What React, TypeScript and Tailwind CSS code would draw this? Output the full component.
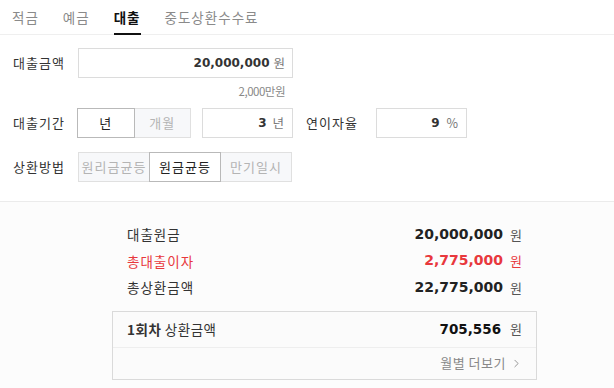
import { ChevronRight } from 'lucide-react';

const KR = "font-['Noto_Sans_CJK_KR',sans-serif]";
const NUM = "font-['DejaVu_Sans',sans-serif]";

const TABS = [
  { label: '적금', active: false },
  { label: '예금', active: false },
  { label: '대출', active: true },
  { label: '중도상환수수료', active: false },
];

const SUMMARY = [
  { label: '대출원금', value: '20,000,000', red: false },
  { label: '총대출이자', value: '2,775,000', red: true },
  { label: '총상환금액', value: '22,775,000', red: false },
];

function Seg({ label, active }: { label: string; active?: boolean }) {
  return (
    <div
      className={
        active
          ? 'relative z-10 flex h-full flex-1 items-center justify-center border border-[#b9b9b9] bg-white text-[13px] tracking-[1px] text-[#222] -mx-px'
          : 'flex h-full flex-1 items-center justify-center border border-[#e0e0e0] bg-[#f7f8fa] text-[13px] tracking-[1px] text-[#b4b4b4]'
      }
    >
      {label}
    </div>
  );
}

export default function App() {
  return (
    <div className={`w-[614px] h-[388px] overflow-hidden bg-white ${KR}`}>
      {/* tabs */}
      <div className="flex h-[35px] gap-[24px] border-b border-[#efefef] px-[12px]">
        {TABS.map((tab) => (
          <div
            key={tab.label}
            className={
              tab.active
                ? 'flex h-[35px] items-center border-b-2 border-[#111] pt-[1px] text-[13.5px] font-bold tracking-[1px] text-[#111]'
                : 'flex h-[35px] items-center pb-[1px] text-[13.5px] tracking-[1px] text-[#8a8a8a]'
            }
          >
            {tab.label}
          </div>
        ))}
      </div>

      {/* form */}
      <div className="px-[13px] pt-[13px]">
        <div className="flex h-[30px] items-center">
          <div className="w-[65px] text-[13px] tracking-[1px] text-[#333]">대출금액</div>
          <div className="flex h-[30px] w-[215px] items-center justify-end border border-[#dcdcdc] pr-[7px]">
            <span className={`${NUM} text-[12px] font-bold text-[#333]`}>20,000,000</span>
            <span className="ml-[4px] text-[12.5px] text-[#777]">원</span>
          </div>
        </div>
        <div className="ml-[65px] h-[30px] w-[215px] pr-[8px] text-right text-[11.5px] leading-[26px] tracking-[-0.5px] text-[#888]">
          2,000만원
        </div>

        <div className="flex h-[30px] items-center">
          <div className="w-[65px] text-[13px] tracking-[1px] text-[#333]">대출기간</div>
          <div className="flex h-[30px] w-[113px]">
            <Seg label="년" active />
            <Seg label="개월" />
          </div>
          <div className="ml-[11px] flex h-[30px] w-[91px] items-center justify-end border border-[#dcdcdc] pr-[8px]">
            <span className={`${NUM} text-[12px] font-bold text-[#333]`}>3</span>
            <span className="ml-[6px] text-[12.5px] text-[#777]">년</span>
          </div>
          <div className="ml-[13px] w-[70px] text-[13px] tracking-[1px] text-[#333]">연이자율</div>
          <div className="flex h-[30px] w-[91px] items-center justify-end border border-[#dcdcdc] pr-[8px]">
            <span className={`${NUM} text-[12px] font-bold text-[#333]`}>9</span>
            <span className="ml-[7px] text-[12.5px] text-[#777]">%</span>
          </div>
        </div>

        <div className="mt-[14px] flex h-[30px] items-center">
          <div className="w-[65px] text-[13px] tracking-[1px] text-[#333]">상환방법</div>
          <div className="flex h-[30px] w-[214px]">
            <Seg label="원리금균등" />
            <Seg label="원금균등" active />
            <Seg label="만기일시" />
          </div>
        </div>
      </div>

      {/* result */}
      <div className="mt-[19px] h-[200px] border-t border-[#ebebeb] bg-[#fcfcfc] pt-[19px]">
        <div className="ml-[127px] w-[395px]">
          {SUMMARY.map((row) => (
            <div key={row.label} className="flex h-[26.5px] items-center justify-between">
              <span className={`text-[13.5px] tracking-[1px] ${row.red ? 'text-[#e8383d]' : 'text-[#333]'}`}>{row.label}</span>
              <span className="flex items-center">
                <span className={`${NUM} text-[14px] font-bold ${row.red ? 'text-[#e8383d]' : 'text-[#222]'}`}>
                  {row.value}
                </span>
                <span className={`ml-[7px] text-[13px] ${row.red ? 'text-[#e8383d]' : 'text-[#555]'}`}>원</span>
              </span>
            </div>
          ))}
        </div>

        <div className="ml-[112px] mt-[10px] w-[425px] border border-[#dadada] bg-[#fbfbfb]">
          <div className="flex h-[36px] items-center justify-between border-b border-[#eeeeee] px-[14px]">
            <span className="text-[13.5px] tracking-[0.5px] text-[#333]">
              <span className="font-bold">1회차</span> 상환금액
            </span>
            <span className="flex items-center">
              <span className={`${NUM} text-[13.5px] font-bold text-[#111]`}>705,556</span>
              <span className="ml-[9px] text-[13px] text-[#555]">원</span>
            </span>
          </div>
          <div className="flex h-[31px] items-center justify-end pr-[13px] text-[13px] tracking-[0.5px] text-[#888]">
            월별 더보기
            <ChevronRight className="ml-[4px] h-[13px] w-[13px]" strokeWidth={1.6} />
          </div>
        </div>
      </div>
    </div>
  );
}
